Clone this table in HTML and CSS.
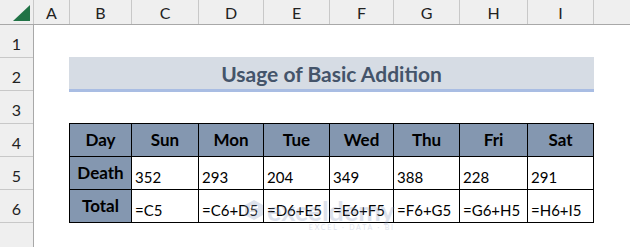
FILE: index.html
```html
<!DOCTYPE html>
<html lang="en">
<head>
  <meta charset="UTF-8">
  <title>Usage of Basic Addition</title>
  <link rel="stylesheet" href="styles.css">
</head>
<body>
  <div class="sheet">
    <div class="col-heads">
      <div class="corner">
        <svg width="17" height="16" viewBox="0 0 17 16"><polygon points="17,0 17,16 0,16" fill="#217346"/></svg>
      </div>
      <div class="col-head w-a">A</div>
      <div class="col-head w-b">B</div>
      <div class="col-head w-c">C</div>
      <div class="col-head w-d">D</div>
      <div class="col-head w-e">E</div>
      <div class="col-head w-f">F</div>
      <div class="col-head w-g">G</div>
      <div class="col-head w-h">H</div>
      <div class="col-head w-i">I</div>
      <div class="col-head rest"></div>
    </div>

    <div class="body">
      <div class="row-heads">
        <div class="row-head">1</div>
        <div class="row-head">2</div>
        <div class="row-head">3</div>
        <div class="row-head">4</div>
        <div class="row-head">5</div>
        <div class="row-head">6</div>
        <div class="row-head last"></div>
      </div>

      <div class="cells">
        <div class="gap-top"></div>
        <div class="title">Usage of Basic Addition</div>
        <div class="gap-mid"></div>

        <div class="data">
          <div class="cell head">Day</div>
          <div class="cell head">Sun</div>
          <div class="cell head">Mon</div>
          <div class="cell head">Tue</div>
          <div class="cell head">Wed</div>
          <div class="cell head">Thu</div>
          <div class="cell head">Fri</div>
          <div class="cell head">Sat</div>

          <div class="cell head label">Death</div>
          <div class="cell">352</div>
          <div class="cell">293</div>
          <div class="cell">204</div>
          <div class="cell">349</div>
          <div class="cell">388</div>
          <div class="cell">228</div>
          <div class="cell">291</div>

          <div class="cell head label">Total</div>
          <div class="cell">=C5</div>
          <div class="cell">=C6+D5</div>
          <div class="cell">=D6+E5</div>
          <div class="cell">=E6+F5</div>
          <div class="cell">=F6+G5</div>
          <div class="cell">=G6+H5</div>
          <div class="cell">=H6+I5</div>
        </div>
      </div>
    </div>

    <!-- faint site mark over the table -->
    <div class="mark">
      <svg width="22" height="22" viewBox="0 0 22 22">
        <path d="M11 1 L20 6 L20 16 L11 21 L2 16 L2 6 Z" fill="#7d8fb8"/>
        <path d="M7 8 H15 M7 11 H13 M7 14 H15" stroke="#fff" stroke-width="2"/>
      </svg>
      <div class="mark-text">
        <span class="mark-name">exceldemy</span>
        <span class="mark-sub">EXCEL · DATA · BI</span>
      </div>
    </div>
  </div>
</body>
</html>
```

FILE: styles.css
```css
* {
  box-sizing: border-box;
}
body {
  margin: 0;
  background: #fff;
  font-family: Lato, 'Liberation Sans', sans-serif;
  color: #000;
}
.sheet {
  position: relative;
  width: 630px;
  height: 247px;
  overflow: hidden;
}

/* column letters */
.col-heads {
  display: flex;
  height: 25px;
  background: #efefef;
  border-bottom: 1px solid #a8a8a8;
}
.corner {
  width: 34px;
  border-right: 1px solid #c8c8c8;
  display: flex;
  align-items: flex-start;
  justify-content: flex-end;
  padding: 5px 3px 0 0;
}
.corner svg {
  display: block;
}
.col-head {
  display: flex;
  align-items: center;
  justify-content: center;
  border-right: 1px solid #c8c8c8;
  font-size: 16px;
  color: #222;
  padding-top: 1px;
}
.w-a { width: 36px; }
.w-b { width: 62px; }
.w-c { width: 67px; }
.w-d { width: 65px; }
.w-e { width: 66px; }
.w-f { width: 64px; }
.w-g { width: 66px; }
.w-h { width: 68px; }
.w-i { width: 66px; }
.col-head.rest {
  flex: 1;
  border-right: none;
}

/* row numbers + cells */
.body {
  display: flex;
}
.row-heads {
  width: 34px;
  background: #efefef;
  border-right: 1px solid #a8a8a8;
  height: 222px;
}
.row-head {
  height: 33px;
  border-bottom: 1px solid #c8c8c8;
  display: flex;
  align-items: flex-end;
  justify-content: center;
  font-size: 16px;
  line-height: 20px;
  color: #222;
  padding-bottom: 3px;
}
.row-head.last {
  border-bottom: none;
}
.cells {
  flex: 1;
  padding-left: 35px;
}
.gap-top {
  height: 32px;
}
.title {
  width: 525px;
  height: 35px;
  background: #d6dce4;
  border-bottom: 3px solid #a9bde3;
  display: flex;
  align-items: center;
  justify-content: center;
  font-size: 21px;
  font-weight: 700;
  color: #44546a;
  padding-top: 1px;
}
.gap-mid {
  height: 31px;
}

/* the data block */
.data {
  display: grid;
  grid-template-columns: 62px 67px 65px 66px 64px 66px 68px 66px;
  grid-auto-rows: 33px;
  width: max-content;
  border-left: 1px solid #000;
  border-top: 1px solid #000;
}
.cell {
  border-right: 1px solid #000;
  border-bottom: 1px solid #000;
  display: flex;
  align-items: flex-end;
  padding: 0 0 3px 3px;
  font-size: 15px;
  line-height: 18px;
}
.cell.head {
  background: #8497b0;
  font-weight: 700;
  font-size: 17px;
  align-items: center;
  justify-content: center;
  padding: 0;
}

.mark {
  position: absolute;
  left: 243px;
  top: 199px;
  display: flex;
  align-items: flex-start;
  gap: 2px;
  opacity: 0.25;
  pointer-events: none;
}
.mark-text {
  display: flex;
  flex-direction: column;
  align-items: flex-end;
}
.mark-name {
  font-size: 27px;
  line-height: 24px;
  font-weight: 700;
  color: #7d8fb8;
}
.mark-sub {
  font-size: 7px;
  letter-spacing: 1.8px;
  color: #7d8fb8;
  line-height: 8px;
}
```
